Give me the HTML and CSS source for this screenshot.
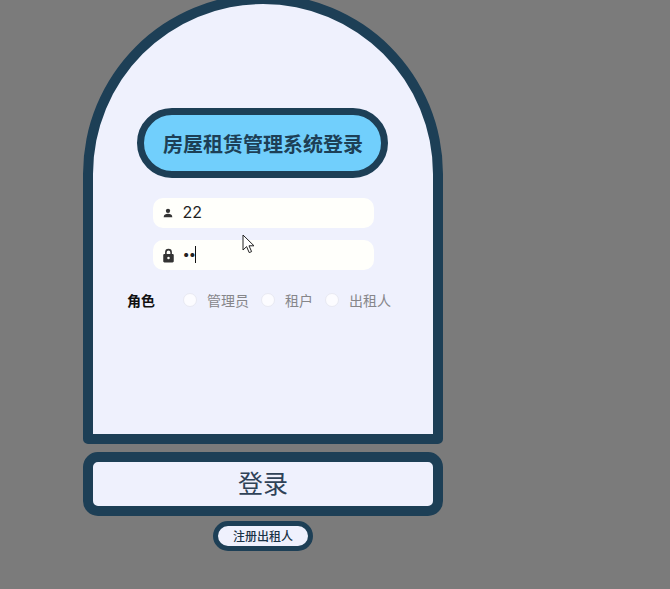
FILE: index.html
```html
<!DOCTYPE html>
<html lang="zh">
<head>
<meta charset="utf-8">
<title>房屋租赁管理系统登录</title>
<link rel="stylesheet" href="styles.css">
</head>
<body>
<main class="page">
  <section class="card">
    <h1 class="title">房屋租赁管理系统登录</h1>
    <div class="field">
      <svg class="icon" viewBox="0 0 12 12"><circle cx="6" cy="3.4" r="2.600"/><path d="M.8 11c0-2.900 2.500-4 5.200-4s5.200 1.100 5.200 4z"/></svg>
      <span class="value">22</span>
    </div>
    <div class="field">
      <svg class="icon icon-lock" viewBox="0 0 12 14"><path fill-rule="evenodd" d="M2.800 5.500V4a3.200 3.200 0 0 1 6.400 0v1.500h.6c.6 0 1.100.5 1.100 1.100v5.800c0 .6-.5 1.100-1.100 1.100H2.200c-.6 0-1.100-.5-1.100-1.100V6.600c0-.6.5-1.100 1.100-1.100zM4.300 5.500h3.400V4a1.700 1.700 0 0 0-3.400 0zM6 8.200a1.200 1.200 0 1 0 0 2.400a1.200 1.200 0 0 0 0-2.400z"/></svg>
      <span class="value dots">••</span><span class="caret"></span>
    </div>
    <div class="roles">
      <span class="roles-label">角色</span>
      <span class="radio radio-first"></span><span class="role-text">管理员</span>
      <span class="radio"></span><span class="role-text">租户</span>
      <span class="radio"></span><span class="role-text">出租人</span>
    </div>
  </section>
  <button class="login" type="button">登录</button>
  <button class="register" type="button">注册出租人</button>
</main>
<svg class="cursor" viewBox="0 0 14 20"><path d="M1 1v15l3.600-3.400 2.600 6 2.400-1-2.600-5.800h5z"/></svg>
</body>
</html>
```
FILE: styles.css
```css
* { box-sizing: border-box; }
html, body { margin: 0; height: 100%; }
body {
  background: #7b7b7b;
  font-family: "Noto Sans CJK SC", "Noto Sans", sans-serif;
  overflow: hidden;
  position: relative;
}
.page {
  width: 360px;
  margin: -6px 0 0 83px;
  display: flex;
  flex-direction: column;
  align-items: center;
}
.card {
  width: 360px;
  height: 450px;
  background: #eff1fd;
  border: 10px solid #1d3f56;
  border-radius: 180px 180px 5px 5px;
  display: flex;
  flex-direction: column;
  align-items: center;
  padding-top: 104px;
}
.title {
  width: 251px;
  height: 70px;
  margin: 0 0 20px -1px;
  padding-left: 1px;
  background: #71cffc;
  border: 7px solid #1d3f56;
  border-radius: 35px;
  color: #1d3f56;
  font-size: 20px;
  font-weight: 700;
  line-height: 58px;
  text-align: center;
}
.field {
  width: 221px;
  height: 30px;
  margin-bottom: 12px;
  background: #fffffb;
  border-radius: 10px;
  display: flex;
  align-items: center;
  padding-left: 10px;
  color: #222;
  font-family: "Inter", "Noto Sans", sans-serif;
  font-size: 16px;
}
.icon {
  width: 10px;
  height: 10px;
  margin-right: 10px;
  fill: #333;
  flex: none;
}
.icon-lock {
  width: 13px;
  height: 15px;
  margin-left: -1px;
  margin-right: 8px;
}
.value { line-height: 28px; height: 30px; }
.dots { font-size: 13px; letter-spacing: -1px; color: #222; }
.caret {
  width: 1px;
  height: 17px;
  background: #111;
  margin: -2px 0 0 0;
}
.roles {
  width: 340px;
  margin-top: 6px;
  padding-left: 34px;
  display: flex;
  align-items: center;
  height: 24px;
}
.roles-label {
  width: 56px;
  font-size: 14px;
  line-height: 20px;
  height: 20px;
  font-weight: 700;
  color: #111;
}
.radio {
  width: 14px;
  height: 14px;
  border-radius: 50%;
  background: #fcfcff;
  border: 1px solid #e8e9f2;
  flex: none;
  margin-left: 12px;
}
.radio-first { margin-left: 0; }
.role-text {
  margin-left: 10px;
  font-size: 14px;
  color: #86868a;
}
.login {
  width: 360px;
  height: 64px;
  margin-top: 8px;
  background: #eff1fd;
  border: 10px solid #1d3f56;
  border-radius: 15px;
  color: #2f4257;
  font-family: inherit;
  font-size: 25px;
  padding: 0 0 4px;
}
.register {
  width: 100px;
  height: 30px;
  margin-top: 5px;
  background: #eff1fd;
  border: 5px solid #1d3f56;
  border-radius: 15px;
  color: #1a3347;
  font-family: inherit;
  font-size: 12px;
  font-weight: 500;
  padding: 0 0 2px;
}
.cursor {
  position: absolute;
  left: 242px;
  top: 234px;
  width: 14px;
  height: 20px;
  fill: #fff;
  stroke: #222;
  stroke-width: 1;
}
```
